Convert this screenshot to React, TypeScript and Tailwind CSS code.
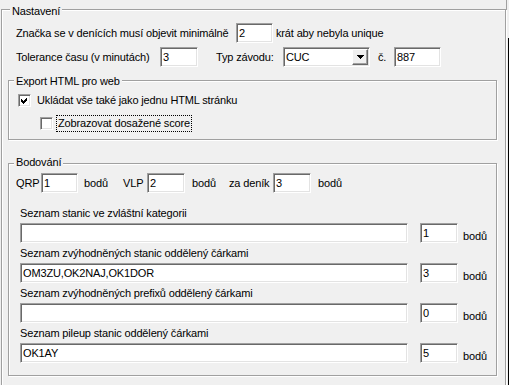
import type { ReactNode } from 'react';

// Classic Win32 property page: "Nastavení" with nested group boxes.

const font =
  "font-['Liberation_Sans',Arial,sans-serif] text-[11px] leading-[13px] tracking-[-0.15px] text-black";

const Field = ({ value = '', className = '' }: { value?: string; className?: string }) => (
  <div
    className={`flex h-[20px] items-center overflow-hidden whitespace-nowrap border border-t-[#a0a0a0] border-l-[#a0a0a0] border-b-white border-r-white bg-white px-[2px] shadow-[inset_1px_1px_0_#696969,inset_-1px_-1px_0_#e3e3e3] ${className}`}
  >
    {value}
  </div>
);

const Group = ({
  label,
  labelClass,
  className,
  children,
}: {
  label: string;
  labelClass: string;
  className: string;
  children: ReactNode;
}) => (
  <div
    className={`relative border border-[#a0a0a0] shadow-[1px_1px_0_#fff,inset_1px_1px_0_#fff] ${className}`}
  >
    <span className={`absolute bg-[#f0f0f0] px-[2px] ${labelClass}`}>{label}</span>
    {children}
  </div>
);

const CheckBox = ({ checked }: { checked?: boolean }) => (
  <div className="h-[13px] w-[13px] shrink-0 border border-t-[#a0a0a0] border-l-[#a0a0a0] border-b-white border-r-white bg-white shadow-[inset_1px_1px_0_#696969,inset_-1px_-1px_0_#e3e3e3]">
    {checked && (
      <svg width="11" height="11" viewBox="0 0 11 11" shapeRendering="crispEdges">
        <polygon points="2,4 4,6 8,2 8,5 4,9 2,7" fill="#000" />
      </svg>
    )}
  </div>
);

const ListRow = ({ label, value, points, first }: { label: string; value: string; points: string; first?: boolean }) => (
  <div className={first ? 'mt-[14px] pl-[11px]' : 'mt-[4px] pl-[11px]'}>
    <div>{label}</div>
    <div className="mt-[3px] flex">
      <Field value={value} className="w-[388px]" />
      <Field value={points} className="ml-[12px] w-[38px]" />
      <span className="ml-[5px] self-end">bodů</span>
    </div>
  </div>
);

export default function App() {
  return (
    <div className={`flex h-[385px] w-[509px] overflow-hidden bg-[#f0f0f0] ${font}`}>
      <div className="w-[506px] shrink-0 pl-[1px] pt-[9px]">
        <Group label="Nastavení" labelClass="left-[8px] top-[-5px]" className="h-[400px] w-[505px]">
          <div className="mt-[13px] flex h-[20px] items-center pl-[14px]">
            <span className="w-[220px]">Značka se v denících musí objevit minimálně</span>
            <Field value="2" className="w-[37px]" />
            <span className="ml-[3px]">krát aby nebyla unique</span>
          </div>

          <div className="mt-[4px] flex h-[20px] items-center pl-[14px]">
            <span className="w-[144px]">Tolerance času (v minutách)</span>
            <Field value="3" className="w-[38px]" />
            <span className="ml-[18px] w-[67px]">Typ závodu:</span>
            <div className="relative flex h-[20px] w-[87px] items-center border border-t-[#a0a0a0] border-l-[#a0a0a0] border-b-white border-r-white bg-white pl-[2px] shadow-[inset_1px_1px_0_#696969,inset_-1px_-1px_0_#e3e3e3]">
              <span className="flex-1">CUC</span>
              <div className="mr-[1px] flex h-[16px] w-[16px] items-center justify-center border border-t-white border-l-white border-b-[#696969] border-r-[#696969] bg-[#f0f0f0] shadow-[inset_-1px_-1px_0_#a0a0a0]">
                <svg width="7" height="4" viewBox="0 0 7 4" shapeRendering="crispEdges">
                  <polygon points="0,0 7,0 3.5,4" fill="#000" />
                </svg>
              </div>
            </div>
            <span className="ml-[8px] w-[16px]">č.</span>
            <Field value="887" className="w-[47px]" />
          </div>

          <Group label="Export HTML pro web" labelClass="left-[5px] top-[-6px]" className="ml-[6px] mt-[13px] h-[60px] w-[489px]">
            <div className="ml-[9px] mt-[13px] flex items-center">
              <CheckBox checked />
              <span className="ml-[6px]">Ukládat vše také jako jednu HTML stránku</span>
            </div>
            <div className="ml-[31px] mt-[8px] flex items-center">
              <CheckBox />
              <span className="ml-[3px] flex h-[17px] items-center border border-dotted border-black px-[1px]">
                Zobrazovat dosažené score
              </span>
            </div>
          </Group>

          <Group label="Bodování" labelClass="left-[5px] top-[-8px]" className="ml-[6px] mt-[23px] h-[213px] w-[489px]">
            <div className="mt-[9px] flex h-[20px] items-center pl-[7px]">
              <span className="w-[25px]">QRP</span>
              <Field value="1" className="w-[37px]" />
              <span className="ml-[6px] w-[39px]">bodů</span>
              <span className="w-[24px]">VLP</span>
              <Field value="2" className="w-[38px]" />
              <span className="ml-[7px] w-[37px]">bodů</span>
              <span className="w-[44px]">za deník</span>
              <Field value="3" className="w-[38px]" />
              <span className="ml-[7px]">bodů</span>
            </div>
            <ListRow first label="Seznam stanic ve zvláštní kategorii" value="" points="1" />
            <ListRow label="Seznam zvýhodněných stanic oddělený čárkami" value="OM3ZU,OK2NAJ,OK1DOR" points="3" />
            <ListRow label="Seznam zvýhodněných prefixů oddělený čárkami" value="" points="0" />
            <ListRow label="Seznam pileup stanic oddělený čárkami" value="OK1AY" points="5" />
          </Group>
        </Group>
      </div>
      <div className="w-[1px] shrink-0 bg-[#a0a0a0]" />
      <div className="w-[1px] shrink-0" />
      <div className="mt-[38px] w-[1px] shrink-0 bg-black" />
    </div>
  );
}
